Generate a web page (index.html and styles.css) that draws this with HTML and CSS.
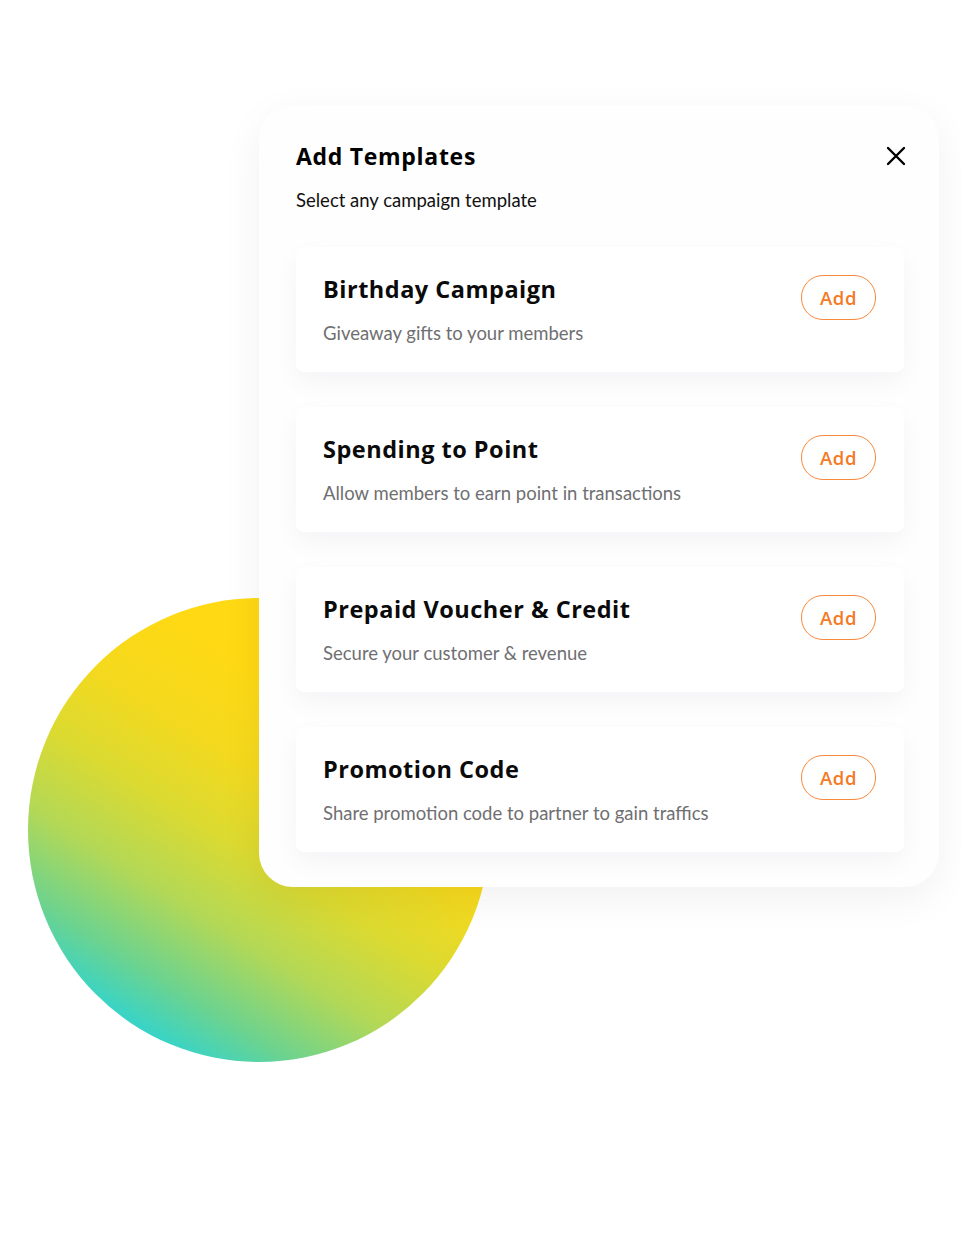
FILE: index.html
```html
<!DOCTYPE html>
<html lang="en">
<head>
    <meta charset="UTF-8">
    <meta name="viewport" content="width=device-width, initial-scale=1.0">
    <title>Add Templates</title>
    <link rel="stylesheet" href="styles.css">
</head>
<body>
    <div class="stage">
        <div class="blob"></div>

        <div class="modal">
            <div class="modal-head">
                <h1 class="modal-title">Add Templates</h1>
                <button class="close" type="button" aria-label="Close">
                    <svg width="20" height="20" viewBox="0 0 20 20">
                        <path d="M2 2 L18 18 M18 2 L2 18" stroke="#000" stroke-width="2.4" stroke-linecap="round" fill="none"/>
                    </svg>
                </button>
            </div>
            <p class="modal-sub">Select any campaign template</p>

            <div class="templates">
                <div class="template">
                    <div class="template-text">
                        <h2>Birthday Campaign</h2>
                        <p>Giveaway gifts to your members</p>
                    </div>
                    <button class="add-btn" type="button">Add</button>
                </div>
                <div class="template">
                    <div class="template-text">
                        <h2>Spending to Point</h2>
                        <p>Allow members to earn point in transactions</p>
                    </div>
                    <button class="add-btn" type="button">Add</button>
                </div>
                <div class="template">
                    <div class="template-text">
                        <h2>Prepaid Voucher &amp; Credit</h2>
                        <p>Secure your customer &amp; revenue</p>
                    </div>
                    <button class="add-btn" type="button">Add</button>
                </div>
                <div class="template">
                    <div class="template-text">
                        <h2>Promotion Code</h2>
                        <p>Share promotion code to partner to gain traffics</p>
                    </div>
                    <button class="add-btn" type="button">Add</button>
                </div>
            </div>
        </div>
    </div>
</body>
</html>
```

FILE: styles.css
```css
body {
    margin: 0;
    background: #fff;
    font-family: Lato, "Open Sans", sans-serif;
}
.stage {
    position: relative;
    width: 961px;
    height: 1247px;
    padding-top: 105px;
    box-sizing: border-box;
}
/* gradient circle sitting behind the dialog */
.blob {
    position: absolute;
    left: 28px;
    top: 598px;
    width: 462px;
    height: 464px;
    border-radius: 50%;
    background: linear-gradient(32deg, #1fd4e2 10%, #6cd38f 22%, #b3d856 34%, #dbda31 46%, #f4d91e 58%, #ffd913 72%);
}
.modal {
    position: relative;
    margin-left: 259px;
    width: 680px;
    box-sizing: border-box;
    padding: 37px 35px 35px 37px;
    background: #fefefe;
    border-radius: 34px;
    box-shadow: 0 12px 40px rgba(0, 0, 0, 0.06);
}
.modal-head {
    display: flex;
    justify-content: space-between;
    align-items: center;
}
.modal-title {
    margin: 0;
    font-family: "Open Sans", sans-serif;
    font-size: 23px;
    line-height: 28px;
    font-weight: 700;
    letter-spacing: 0.7px;
    color: #000;
}
.close {
    background: none;
    border: none;
    padding: 0;
    margin-right: -2px;
    width: 20px;
    height: 20px;
    cursor: pointer;
}
.modal-sub {
    margin: 18px 0 35px;
    font-size: 18.5px;
    line-height: 24px;
    color: #111;
}
.templates {
    display: flex;
    flex-direction: column;
    gap: 35px;
}
.template {
    display: flex;
    justify-content: space-between;
    align-items: flex-start;
    padding: 28px 28px 27px 27px;
    background: #fff;
    border-radius: 8px;
    box-shadow: 0 10px 26px rgba(30, 30, 80, 0.045);
}
.template h2 {
    margin: 0;
    font-family: "Open Sans", sans-serif;
    font-size: 23.5px;
    line-height: 28px;
    font-weight: 700;
    letter-spacing: 0.5px;
    color: #0a0a0a;
}
.template p {
    margin: 18px 0 0;
    font-size: 18.5px;
    line-height: 24px;
    color: #6f6f72;
}
.add-btn {
    width: 75px;
    height: 45px;
    border: 1.5px solid #f78a3d;
    border-radius: 22px;
    background: #fff;
    color: #f47a25;
    font-family: "Open Sans", sans-serif;
    font-size: 18.5px;
    font-weight: 600;
    letter-spacing: 0.6px;
    cursor: pointer;
}
```
